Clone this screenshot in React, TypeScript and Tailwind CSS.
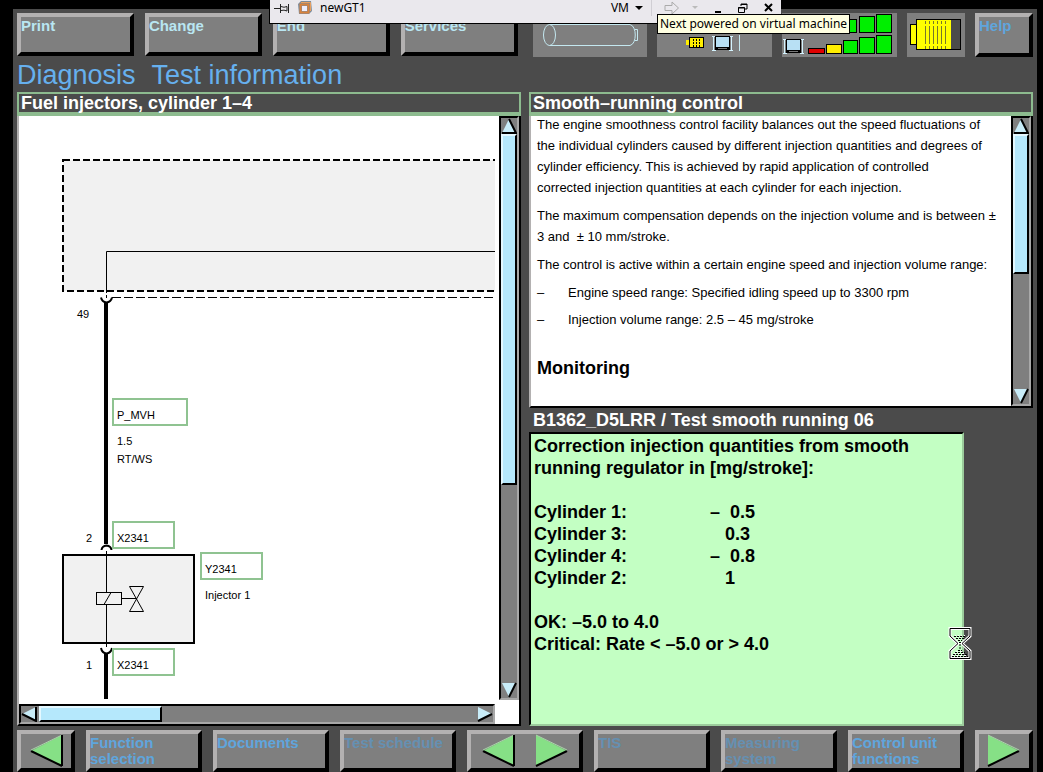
import type { ReactNode } from "react";
import clsx from "clsx";

const bevel =
  "border-4 border-t-[#b3b1b1] border-l-[#b3b1b1] border-r-black border-b-black bg-[#7f7f7f]";

const boxedLabels = [
  { text: "P_MVH", x: 94, y: 283, width: 74 },
  { text: "X2341", x: 94, y: 406, width: 61 },
  { text: "Y2341", x: 182, y: 437, width: 61 },
  { text: "X2341", x: 94, y: 533, width: 61 },
];

const readings = [
  { name: "Cylinder 1:", value: "–  0.5" },
  { name: "Cylinder 3:", value: "   0.3" },
  { name: "Cylinder 4:", value: "–  0.8" },
  { name: "Cylinder 2:", value: "   1" },
];

type ToolButtonProps = {
  label: string;
  bright?: boolean;
  disabled?: boolean;
};

const ToolButton = ({ label, bright, disabled }: ToolButtonProps) => {
  const color = disabled ? "text-[#6590b2]" : bright ? "text-[#b9e6f2]" : "text-[#5fa5dc]";

  return (
    <button
      disabled={disabled}
      className={clsx(
        bevel,
        "flex items-start justify-start min-w-0 pt-px text-left text-[15px] leading-4 font-bold",
        color
      )}
    >
      {label}
    </button>
  );
};

const GreenArrow = ({ flip }: { flip?: boolean }) => (
  <svg width="34" height="34" viewBox="0 0 34 34" className={flip ? "-scale-x-100" : ""}>
    <path d="M1 1V32L32 17Z" fill="#86e086" />
    <path d="M1 32L32 17" stroke="#000" strokeWidth="2" />
    <path d="M1 1L32 16" stroke="#a9d3a9" />
    {flip && <path d="M1 1V32" stroke="#000" strokeWidth="2" />}
  </svg>
);

const ArrowButton = ({ label, flip }: { label: string; flip?: boolean }) => (
  <button aria-label={label} className={clsx(bevel, "flex items-center justify-center min-w-0")}>
    <GreenArrow flip={flip} />
  </button>
);

const arrowShapes = {
  up: { fill: "M7 0L14 14H0Z", edge: "M7 0L14 14H0" },
  down: { fill: "M0 0H14L7 14Z", edge: "M14 0L7 14" },
  left: { fill: "M14 0V14L0 7Z", edge: "M14 0V14L0 7" },
  right: { fill: "M0 0L14 7L0 14Z", edge: "M14 7L0 14" },
};

const ScrollArrow = ({ to }: { to: keyof typeof arrowShapes }) => (
  <button aria-label={`Scroll ${to}`} className="shrink-0">
    <svg width="16" height="16" viewBox="-1 -1 16 16" className="block">
      <path d={arrowShapes[to].fill} fill="#c8ecf8" />
      <path d={arrowShapes[to].edge} fill="none" stroke="#000" strokeWidth="2" />
    </svg>
  </button>
);

const VerticalScroll = ({ thumb }: { thumb: string }) => (
  <div className="flex w-5 shrink-0 flex-col items-center border-2 border-t-black border-l-black border-r-[#a8a8a8] border-b-[#a8a8a8] bg-[#7f7f7f]">
    <ScrollArrow to="up" />
    <div className="flex w-full flex-1 flex-col">
      <div
        className={clsx(
          "border-2 border-t-[#e4f8ff] border-l-[#e4f8ff] border-r-black border-b-black bg-[#b5e8fc]",
          thumb
        )}
      />
    </div>
    <ScrollArrow to="down" />
  </div>
);

const PanelHeader = ({ children }: { children: ReactNode }) => (
  <h2 className="h-6 border-2 border-b-4 border-[#8dbb8f] pl-0.5 text-lg leading-[18px] font-bold whitespace-nowrap text-white">
    {children}
  </h2>
);

const Monitor = ({ x, y }: { x: number; y: number }) => (
  <g transform={`translate(${x} ${y})`} stroke="none">
    <path d="M1.5 1V16M19.5 1V16M0 1.5H4M17 1.5H21M0 15.5H4M17 15.5H21" stroke="#d4f4ff" />
    <rect x="3" y="1" width="15" height="14" fill="#000" />
    <rect x="4" y="2" width="13" height="10" fill="#b8e0f4" />
    <path d="M6 13.5H15" stroke="#777" />
  </g>
);

const StatusIcons = () => (
  <>
    <div className="min-w-0 overflow-hidden bg-[#7f7f7f]">
      <svg width="114" height="44" fill="none" stroke="#c4e8f0">
        <ellipse cx="16.5" cy="22" rx="6" ry="10.5" />
        <path d="M16.5 11.5H97C104 13 104 31 97 32.5H16.5M102 16.5H104.5V27.5H102" />
      </svg>
    </div>
    <div className="min-w-0 overflow-hidden bg-[#7f7f7f]">
      <svg width="114" height="44">
        <rect x="32.5" y="24.5" width="14" height="10" fill="#ffee00" stroke="#000" />
        <path d="M30.5 27V32" stroke="#ffee00" strokeWidth="3" />
        <path d="M36.5 26V34M39.5 26V34M42.5 26V34" stroke="#000" strokeDasharray="2 1" />
        <Monitor x={55} y={22} />
        <path d="M82.5 22V38" stroke="#c4e8f0" />
      </svg>
    </div>
    <div className="min-w-0 overflow-hidden bg-[#7f7f7f]">
      <svg width="114" height="44" stroke="#000">
        <rect x="60.5" y="6.5" width="14" height="13" fill="#00ef00" />
        <rect x="77.5" y="3.5" width="15" height="16" fill="#00ef00" />
        <rect x="94.5" y="1.5" width="15" height="18" fill="#00ef00" />
        <Monitor x={1} y={25} />
        <rect x="26.5" y="35.5" width="16" height="5" fill="#e00000" />
        <rect x="44.5" y="31.5" width="15" height="9" fill="#ffee00" />
        <rect x="61.5" y="27.5" width="14" height="13" fill="#00ef00" />
        <rect x="77.5" y="24.5" width="15" height="16" fill="#00ef00" />
        <rect x="94.5" y="22.5" width="15" height="18" fill="#00ef00" />
      </svg>
    </div>
    <div className="min-w-0 overflow-hidden bg-[#7f7f7f]">
      <svg width="57" height="44">
        <rect x="3.5" y="11.5" width="6" height="20" fill="#ffff00" stroke="#000" />
        <rect x="9.5" y="6.5" width="44" height="30" fill="#4b4b4b" stroke="#000" />
        <rect x="10" y="7" width="34" height="29" fill="#ffff00" />
        <path
          d="M18.5 8V36M22.5 8V36M26.5 8V36M30.5 8V36M34.5 8V36M38.5 8V36"
          stroke="#77772a"
          strokeDasharray="3 2 18 2"
        />
      </svg>
    </div>
  </>
);

const WiringDiagram = () => (
  <svg
    width="476"
    height="588"
    className="block shrink-0 font-['Liberation_Sans',sans-serif] text-[11px]"
    fill="none"
    stroke="#000"
    role="img"
    aria-label="Wiring of injector 1"
  >
    <rect x="44" y="44" width="500" height="131" fill="#f1f1f1" strokeWidth="2" strokeDasharray="7 3" />
    <path d="M87.5 175V135.5H476" />
    <path d="M93 181.5H476" strokeDasharray="9 3" />
    <path d="M87.5 174V182" strokeDasharray="3 2" />
    <path d="M82 181.5Q83 186 87.5 186.5Q92 186 93 181.5" strokeWidth="2" />
    <path d="M87 187V428" strokeWidth="4" />

    <rect x="44" y="439" width="131" height="88" fill="#f1f1f1" strokeWidth="2" />
    <path d="M82.5 434Q83 430 87.5 429.5Q92 430 92.5 434" strokeWidth="2" />
    <path d="M87.5 435V476M87.5 489V531" />
    <rect x="77.5" y="476.5" width="25" height="12" />
    <path d="M85 488.5L92 476.5M102.5 482.5H117.5" />
    <path d="M110.5 470.5H124.5L110.5 495.5H124.5Z" />
    <path d="M82 532Q83 537 87.5 537.5Q92 537 93 532" strokeWidth="2" />
    <path d="M87 538V583" strokeWidth="4" />

    {boxedLabels.map((label) => (
      <g key={`${label.text}-${label.y}`}>
        <rect x={label.x} y={label.y} width={label.width} height="26" stroke="#8fc391" strokeWidth="2" />
        <text x={label.x + 4} y={label.y + 20} fill="#000" stroke="none">
          {label.text}
        </text>
      </g>
    ))}
    <g fill="#000" stroke="none">
      <text x="58" y="202">49</text>
      <text x="98" y="329">1.5</text>
      <text x="98" y="347">RT/WS</text>
      <text x="67" y="426">2</text>
      <text x="186" y="483">Injector 1</text>
      <text x="67" y="553">1</text>
    </g>
  </svg>
);

const VmBar = () => (
  <div className="absolute top-0 left-[269px] flex h-6 w-[512px] items-center border-b border-l border-black bg-[#eae8ed] pb-2 font-['Noto_Sans',sans-serif] text-xs text-black">
    <svg width="16" height="12" className="ml-1" fill="none" stroke="#222">
      <path d="M0 6.5H6M6.5 2V11M7 4.5Q10 6 13 4.5V9Q10 7.5 7 8.5M14.5 2V11" />
    </svg>
    <svg width="14" height="14" viewBox="0 0 14 14" className="ml-2">
      <path d="M3 0H13L14 10L11 13H1L0 3Z" fill="#7c8a9a" />
      <path d="M2.5 3.5H10.5V11.5H2.5Z" fill="none" stroke="#d9823c" strokeWidth="2" />
      <path d="M4 5H9V10H4Z" fill="#eef" />
      <path d="M3 1.5H12.5V10" fill="none" stroke="#e8a060" />
    </svg>
    <span className="ml-2">newGT1</span>
    <button className="ml-auto flex items-center gap-1.5">
      VM
      <svg width="8" height="4">
        <path d="M0 0H8L4 4Z" fill="#000" />
      </svg>
    </button>
    <span className="ml-2 h-4 w-px bg-[#d0ced4]" />
    <button aria-label="Next virtual machine" className="ml-3">
      <svg width="16" height="14" viewBox="0 0 16 14" fill="none" stroke="#aaa">
        <path d="M1 4.5H8V1L14.5 7L8 13V9.5H1Z" />
      </svg>
    </button>
    <svg width="6" height="3" className="ml-3">
      <path d="M0 0H6L3 3Z" fill="#bbb" />
    </svg>
    <div className="mr-2 ml-4 flex items-center gap-4">
      <button aria-label="Minimize">
        <svg width="8" height="10">
          <path d="M1 9H7" stroke="#000" strokeWidth="2" />
        </svg>
      </button>
      <button aria-label="Restore">
        <svg width="10" height="10" fill="none" stroke="#000">
          <path d="M3 3V1H9V6H7M3 1.5H9" />
          <path d="M.5 4.5H6.5V9.5H.5ZM0 5H7" />
        </svg>
      </button>
      <button aria-label="Close">
        <svg width="9" height="9" stroke="#000" strokeWidth="2">
          <path d="M1 1L8 8M8 1L1 8" />
        </svg>
      </button>
    </div>
    <div
      role="tooltip"
      className="absolute top-3.5 left-[387px] h-5 border border-black bg-[#ffffe1] px-0.5 leading-[18px] whitespace-nowrap"
    >
      Next powered on virtual machine
    </div>
  </div>
);

const Hourglass = () => (
  <svg
    width="24"
    height="33"
    viewBox="0 0 24 33"
    className="absolute -right-2.5 bottom-16"
    fill="none"
    stroke="#000"
  >
    <path
      d="M2 1.5H22V9L14 16.5L22 24V31.5H2V24L10 16.5L2 9Z"
      stroke="#fff"
      strokeWidth="3"
    />
    <path d="M2 1.5H22V9L14 16.5L22 24V31.5H2V24L10 16.5L2 9Z" />
    <path d="M6 9.5H18M8 11.5H16M10 13.5H14M11 15.5H13" strokeDasharray="2 1" />
    <path d="M7 8.5H17M9 10.5H15M11 12.5H13" stroke="#fff" strokeDasharray="1 2" />
    <path d="M12 17V22M10 23.5H14M7 25.5H17M5 27.5H19M4 29.5H20" strokeDasharray="2 1" />
    <path d="M8 24.5H16M6 26.5H18M4 28.5H20" stroke="#fff" strokeDasharray="2 2" />
  </svg>
);

export default function App() {
  return (
    <div className="relative flex min-h-screen flex-col bg-black pt-[9px] pr-1.5 pl-[13px] font-['Liberation_Sans',Arial,sans-serif]">
      <div className="flex flex-1 flex-col bg-[#4b4b4b] px-1 pt-1">
        <header className="flex h-11 shrink-0 gap-[15px]">
          <nav className="grid h-[43px] flex-1 grid-cols-4 gap-[11px]">
            <ToolButton label="Print" bright />
            <ToolButton label="Change" bright />
            <ToolButton label="End" bright />
            <ToolButton label="Services" bright />
          </nav>
          <div className="grid flex-1 grid-cols-[2fr_2fr_2fr_58px_58px] gap-2.5">
            <StatusIcons />
            <ToolButton label="Help" />
          </div>
        </header>

        <h1 className="flex h-[35px] items-center gap-4 text-[27px] leading-8 text-[#66b0ee]">
          <span>Diagnosis</span>
          <span>Test information</span>
        </h1>

        <main className="grid flex-1 grid-cols-2 gap-2">
          <section className="flex min-w-0 flex-col">
            <PanelHeader>Fuel injectors, cylinder 1–4</PanelHeader>
            <div className="flex flex-1 flex-col border-r-2 border-b-2 border-l-2 border-r-black border-b-black border-l-[#b3b1b1] bg-white">
              <div className="flex flex-1">
                <div className="min-w-0 flex-1 overflow-hidden">
                  <WiringDiagram />
                </div>
                <div className="mb-1 flex">
                  <VerticalScroll thumb="h-[64%]" />
                </div>
              </div>
              <div className="mr-6 flex h-5 items-center border-2 border-t-black border-l-black border-r-[#a8a8a8] border-b-[#a8a8a8] bg-[#7f7f7f]">
                <ScrollArrow to="left" />
                <div className="ml-0.5 flex h-full flex-1">
                  <div className="w-[28%] border-2 border-t-[#e4f8ff] border-l-[#e4f8ff] border-r-black border-b-black bg-[#b5e8fc]" />
                </div>
                <ScrollArrow to="right" />
              </div>
            </div>
          </section>

          <section className="flex min-w-0 flex-col">
            <PanelHeader>Smooth–running control</PanelHeader>
            <div className="flex h-[292px] border-r-2 border-b-2 border-l-2 border-r-black border-b-black border-l-[#b3b1b1] bg-white">
              <article className="flex flex-1 flex-col gap-[7px] overflow-hidden pl-1.5 text-[13px] leading-[21px] text-black">
                <p className="-mt-0.5">
                  The engine smoothness control facility balances out the speed fluctuations of
                  <br />
                  the individual cylinders caused by different injection quantities and degrees of
                  <br />
                  cylinder efficiency. This is achieved by rapid application of controlled
                  <br />
                  corrected injection quantities at each cylinder for each injection.
                </p>
                <p>
                  The maximum compensation depends on the injection volume and is between ±
                  <br />3 and &nbsp;± 10 mm/stroke.
                </p>
                <p>The control is active within a certain engine speed and injection volume range:</p>
                <ul className="flex flex-col gap-1.5">
                  <li className="flex">
                    <span className="w-[31px]">–</span>Engine speed range: Specified idling speed up to 3300 rpm
                  </li>
                  <li className="flex">
                    <span className="w-[31px]">–</span>Injection volume range: 2.5 – 45 mg/stroke
                  </li>
                </ul>
                <h3 className="mt-5 text-lg leading-[22px] font-bold">Monitoring</h3>
              </article>
              <VerticalScroll thumb="h-[55%]" />
            </div>

            <h2 className="h-6 pl-1 text-lg leading-6 font-bold whitespace-nowrap text-white">
              B1362_D5LRR / Test smooth running 06
            </h2>
            <div className="relative mr-[69px] flex-1 border-2 border-t-black border-l-black border-r-[#9ccc9c] border-b-[#9ccc9c] bg-[#c3ffc3] pt-px pl-[3px] text-lg leading-[22px] font-bold text-black">
              <p>
                Correction injection quantities from smooth
                <br />
                running regulator in [mg/stroke]:
              </p>
              <table className="my-[22px]">
                <tbody>
                  {readings.map((reading) => (
                    <tr key={reading.name}>
                      <th scope="row" className="w-44 p-0 text-left">
                        {reading.name}
                      </th>
                      <td className="p-0 whitespace-pre">{reading.value}</td>
                    </tr>
                  ))}
                </tbody>
              </table>
              <p>OK: –5.0 to 4.0</p>
              <p>Critical: Rate &lt; –5.0 or &gt; 4.0</p>
              <Hourglass />
            </div>
          </section>
        </main>

        <footer className="mt-1 grid h-[42px] shrink-0 grid-cols-[1fr_2fr_2fr_2fr_2fr_2fr_2fr_2fr_1fr] gap-[11px]">
          <ArrowButton label="Back" flip />
          <ToolButton label="Function selection" />
          <ToolButton label="Documents" />
          <ToolButton label="Test schedule" disabled />
          <div className={clsx(bevel, "flex items-center justify-center gap-5")}>
            <button aria-label="Previous page">
              <GreenArrow flip />
            </button>
            <button aria-label="Next page">
              <GreenArrow />
            </button>
          </div>
          <ToolButton label="TIS" disabled />
          <ToolButton label="Measuring system" disabled />
          <ToolButton label="Control unit functions" />
          <ArrowButton label="Forward" />
        </footer>
      </div>
      <VmBar />
    </div>
  );
}
